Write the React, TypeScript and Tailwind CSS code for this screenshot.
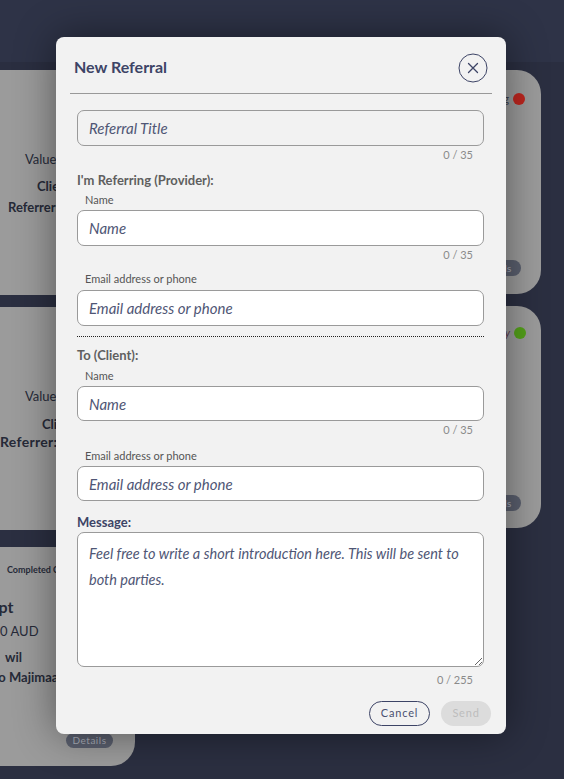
import React from "react";

const font = { fontFamily: "Lato, 'Noto Sans', sans-serif" };

function Counter({ text, className = "" }: { text: string; className?: string }) {
  return (
    <div className={`h-[14px] text-right pr-[11px] text-[11px] leading-[14px] text-[#8a8a8a] ${className}`}>{text}</div>
  );
}

function Label({ text, className = "" }: { text: string; className?: string }) {
  return <div className={`h-[14px] pl-[8px] text-[11px] leading-[14px] text-[#555] ${className}`}>{text}</div>;
}

function Field({ placeholder, className = "", bg = "bg-white" }: { placeholder: string; className?: string; bg?: string }) {
  return (
    <input
      placeholder={placeholder}
      className={`block w-full rounded-[7px] border border-[#9a9a9a] ${bg} pl-[11px] text-[15px] text-[#3d4466] outline-none placeholder:italic placeholder:text-[#4f5675] ${className}`}
      style={font}
    />
  );
}

export default function App() {
  return (
    <div className="relative h-[779px] w-[564px] overflow-hidden bg-[#2b2f41]" style={font}>
      {/* background page */}
      <div className="h-[62px] bg-[#2e3347]" />
      <div className="h-[8px] bg-[#2a2e40]" />
      <div className="flex">
        <div className="flex w-[135px] shrink-0 flex-col gap-[12px]">
          <div className="h-[225px] rounded-r-[24px] bg-[#9b9b9b] pt-[80px] text-[13px] text-[#262a38]">
            <div className="pl-[25px] leading-[18px]">Value: 500 AUD</div>
            <div className="mt-[9px] pl-[37px] font-bold leading-[18px]">Client: Jo</div>
            <div className="mt-[3px] pl-[8px] font-bold leading-[18px]">Referrer: Me</div>
          </div>
          <div className="h-[223px] rounded-r-[24px] bg-[#9b9b9b] pt-[80px] text-[13px] text-[#262a38]">
            <div className="pl-[25px] leading-[18px]">Value: 500 AUD</div>
            <div className="mt-[10px] pl-[42px] font-bold leading-[18px]">Client: Jo</div>
            <div className="mt-[0px] pl-[0px] text-[14px] font-bold leading-[18px] tracking-[0.3px]">Referrer:&nbsp;&nbsp;Me</div>
          </div>
          <div className="mt-[5px] flex h-[219px] flex-col rounded-br-[24px] rounded-tr-[24px] bg-[#9b9b9b] text-[#262a38]">
            <div className="mt-[17px] pl-[7px] text-[9px] font-bold leading-[12px] whitespace-nowrap">Completed Client</div>
            <div className="mt-[21px] -ml-[40px] text-[16px] font-bold leading-[20px] whitespace-nowrap">Receipt</div>
            <div className="mt-[5px] -ml-[15px] text-[13px] leading-[18px] whitespace-nowrap">500 AUD</div>
            <div className="mt-[8px] pl-[5px] text-[13px] font-bold leading-[18px] whitespace-nowrap">wil</div>
            <div className="mt-[2px] -ml-[7px] text-[13px] font-bold leading-[18px] whitespace-nowrap">Jo Majimaa</div>
            <div className="mt-[47px] ml-[66px] h-[15px] w-[47px] rounded-full bg-[#5a5f6e] text-center text-[10px] leading-[15px] tracking-[0.5px] text-[#a9adb8]">Details</div>
          </div>
        </div>
        <div className="flex-1" />
        <div className="mr-[23px] flex w-[190px] shrink-0 flex-col gap-[12px]">
          <div className="relative flex h-[224px] flex-col items-end rounded-[24px] bg-[#9b9b9b] pr-[16px]">
            <div className="mt-[21px] flex items-center gap-[4px]">
              <span className="text-[11px] text-[#3a3e4d]">Pending</span>
              <span className="h-[12px] w-[12px] rounded-full bg-[#bd261f]" />
            </div>
            <div className="mt-auto mb-[18px] mr-[4px] h-[16px] w-[50px] rounded-full bg-[#5a5f6e] text-center text-[10px] leading-[16px] text-[#a9adb8]">Details</div>
          </div>
          <div className="relative flex h-[222px] flex-col items-end rounded-[24px] bg-[#9b9b9b] pr-[15px]">
            <div className="mt-[19px] flex items-center gap-[4px]">
              <span className="text-[11px] italic text-[#5b3a4d]">Accepted by</span>
              <span className="h-[12px] w-[12px] rounded-full bg-[#54a11a]" />
            </div>
            <div className="mt-auto mb-[17px] mr-[5px] h-[16px] w-[50px] rounded-full bg-[#5a5f6e] text-center text-[10px] leading-[16px] text-[#a9adb8]">Details</div>
          </div>
        </div>
      </div>

      {/* modal */}
      <div className="absolute left-[56px] top-[37px] w-[450px] rounded-[8px] bg-[#f2f2f2] pb-[8px] shadow-[0_0_40px_rgba(0,0,0,0.45)]">
        <div className="flex h-[56px] items-center justify-between pl-[18px] pr-[18px] pt-[4px]">
          <div className="text-[16px] font-bold text-[#3d4466]">New Referral</div>
          <button className="mt-[2px] flex h-[30px] w-[30px] items-center justify-center">
            <svg width="30" height="30" viewBox="0 0 30 30" fill="none">
              <circle cx="15" cy="15" r="14" stroke="#3d4466" strokeWidth="1" />
              <path d="M10.5 10.5 L19.5 19.5 M19.5 10.5 L10.5 19.5" stroke="#3d4466" strokeWidth="1.3" strokeLinecap="round" />
            </svg>
          </button>
        </div>
        <div className="mx-[14px] h-px bg-[#999]" />
        <div className="pl-[21px] pr-[22px]">
          <Field placeholder="Referral Title" className="mt-[16px] h-[36px]" bg="bg-[#f2f2f2]" />
          <Counter text="0 / 35" className="mt-[2px]" />
          <div className="mt-[9px] h-[18px] text-[13px] font-bold leading-[18px] text-[#5f5f5f]">I'm Referring (Provider):</div>
          <Label text="Name" className="mt-[4px]" />
          <Field placeholder="Name" className="mt-[3px] h-[36px]" />
          <Counter text="0 / 35" className="mt-[2px]" />
          <Label text="Email address or phone" className="mt-[10px]" />
          <Field placeholder="Email address or phone" className="mt-[4px] h-[36px]" />
          <div className="mt-[10px] border-t border-dotted border-[#222]" />
          <div className="mt-[9px] h-[18px] text-[13px] font-bold leading-[18px] text-[#5f5f5f]">To (Client):</div>
          <Label text="Name" className="mt-[5px]" />
          <Field placeholder="Name" className="mt-[3px] h-[35px]" />
          <Counter text="0 / 35" className="mt-[2px]" />
          <Label text="Email address or phone" className="mt-[12px]" />
          <Field placeholder="Email address or phone" className="mt-[3px] h-[35px]" />
          <div className="mt-[12px] h-[18px] text-[13px] font-bold leading-[18px] text-[#3d4466]">Message:</div>
          <textarea
            placeholder="Feel free to write a short introduction here. This will be sent to both parties."
            className="mt-[1px] block h-[135px] w-full rounded-[7px] border border-[#9a9a9a] bg-white px-[11px] pt-[8px] text-[14.5px] leading-[26px] text-[#3d4466] outline-none placeholder:italic placeholder:text-[#4f5675]"
            style={font}
          />
          <Counter text="0 / 255" className="mt-[6px]" />
          <div className="-mr-[7px] mt-[14px] flex justify-end gap-[11px]">
            <button className="h-[25px] w-[61px] rounded-full border border-[#3d4466] text-[11px] tracking-[0.8px] text-[#4a5070]">Cancel</button>
            <button className="h-[25px] w-[50px] rounded-full bg-[#dcdcdc] text-[11px] tracking-[0.8px] text-[#bdbdbd]">Send</button>
          </div>
        </div>
      </div>
    </div>
  );
}
